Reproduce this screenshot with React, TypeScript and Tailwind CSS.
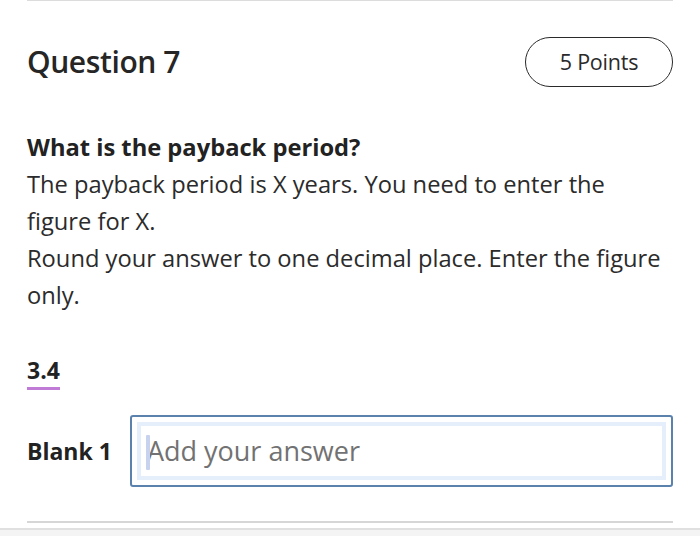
export default function App() {
  return (
    <div className="w-[700px] h-[536px] bg-white flex flex-col overflow-hidden" style={{ fontFamily: '"Open Sans", sans-serif' }}>
      <div className="flex-1 px-[27px] flex flex-col">
        <div className="border-t border-[#dcdcdc]" />

        {/* Header */}
        <div className="flex items-center justify-between mt-[36px]">
          <h2 className="text-[30px] leading-[40px] font-semibold text-[#262626] tracking-[-0.4px]">Question 7</h2>
          <div className="w-[148px] h-[50px] rounded-full border-[1.5px] border-[#2a2a2a] flex items-center justify-center text-[21.5px] font-medium text-[#2a2a2a] tracking-[-0.2px]">
            5 Points
          </div>
        </div>

        {/* Question body */}
        <div className="mt-[42px] pr-[8px] text-[23.7px] leading-[37px] text-[#2b2b2b]">
          <p className="font-bold text-[#222]">What is the payback period?</p>
          <p>The payback period is X years. You need to enter the figure for X.</p>
          <p>Round your answer to one decimal place. Enter the figure only.</p>
        </div>

        {/* Answer */}
        <div className="mt-[41px] flex">
          <span className="text-[23px] leading-[30px] font-bold text-[#222] border-b-[3px] border-[#c07bd6] pb-[2px]">3.4</span>
        </div>

        <div className="mt-[25px] flex items-center gap-[18px]">
          <span className="text-[23px] font-bold text-[#222]">Blank 1</span>
          <div className="flex-1 h-[72px] rounded-[3px] border-2 border-[#5b82ad] p-[5px]">
            <div className="h-full bg-white shadow-[inset_0_0_0_4px_#e4effb] flex items-center pl-[10px] relative">
              <span className="absolute left-[9px] top-[13px] w-[4px] h-[35px] bg-[#c7d3ee] rounded-[1px]" />
              <span className="text-[27px] text-[#727272]">Add your answer</span>
            </div>
          </div>
        </div>

        <div className="mt-auto mb-[5px] border-t-2 border-[#d6d6d6]" />
      </div>
      <div className="h-[8px] bg-[#f4f4f4] border-t-2 border-[#e0e0e0]" />
    </div>
  );
}
